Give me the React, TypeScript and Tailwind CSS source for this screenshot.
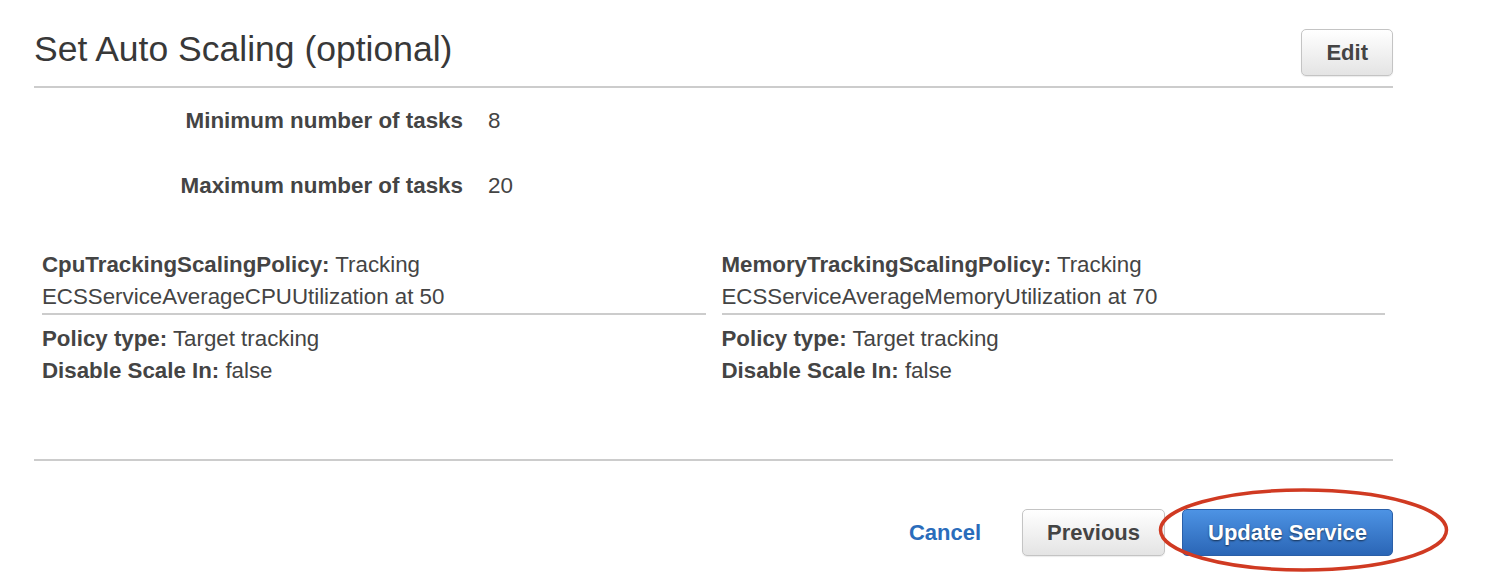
import React from 'react';

const policies = [
  {
    name: 'CpuTrackingScalingPolicy:',
    first: 'Tracking',
    second: 'ECSServiceAverageCPUUtilization at 50',
  },
  {
    name: 'MemoryTrackingScalingPolicy:',
    first: 'Tracking',
    second: 'ECSServiceAverageMemoryUtilization at 70',
  },
];

const greyButton =
  'h-[47px] rounded-[5px] border border-[#c4c4c4] bg-linear-to-b from-[#ffffff] to-[#e4e4e4] px-[24px] text-[22px] font-bold text-[#444] shadow-[0_1px_1px_rgba(0,0,0,0.08)]';

const App: React.FC = () => {
  return (
    <div className="min-h-screen bg-white font-['Liberation_Sans',Arial,sans-serif] text-[#444]">
      <div className="ml-[34px] w-[1359px]">
        {/* Header */}
        <div className="flex h-[88px] items-start justify-between border-b-2 border-[#cccccc]">
          <h2 className="mt-[25px] text-[35.5px] leading-[48px] text-[#383838]">Set Auto Scaling (optional)</h2>
          <button className={`mt-[29px] ${greyButton} h-[46px]`}>Edit</button>
        </div>

        {/* Task counts */}
        <div className="grid grid-cols-[429px_1fr] gap-x-[25px] gap-y-[33px] pt-[17px] text-[22.4px] leading-[32px]">
          <div className="text-right font-bold">Minimum number of tasks</div>
          <div>8</div>
          <div className="text-right font-bold">Maximum number of tasks</div>
          <div>20</div>
        </div>

        {/* Policies */}
        <div className="mt-[47px] grid grid-cols-2 gap-x-[16px] px-[8px] text-[22.3px] leading-[32px]">
          {policies.map((p) => (
            <div key={p.name}>
              <div className="border-b-2 border-[#cccccc]">
                <div>
                  <span className="font-bold">{p.name}</span> {p.first}
                </div>
                <div>{p.second}</div>
              </div>
              <div className="pt-[8px]">
                <div>
                  <span className="font-bold">Policy type:</span> Target tracking
                </div>
                <div>
                  <span className="font-bold">Disable Scale In:</span> false
                </div>
              </div>
            </div>
          ))}
        </div>

        {/* Footer */}
        <div className="mt-[72px] border-t-2 border-[#cccccc]" />
        <div className="mt-[48px] flex items-center justify-end">
          <a href="#" className="mr-[41px] text-[22px] font-bold text-[#2a6cbb]">
            Cancel
          </a>
          <button className={greyButton}>Previous</button>
          <div className="relative ml-[17px]">
            <button className="h-[47px] rounded-[5px] border border-[#2a5fa8] bg-linear-to-b from-[#4d93e4] to-[#2b66b6] px-[25px] text-[22px] font-bold text-white [text-shadow:0_1px_2px_rgba(0,0,0,0.6)]">
              Update Service
            </button>
            <svg
              className="pointer-events-none absolute left-[-24px] top-[-22px]"
              width="292"
              height="86"
              viewBox="0 0 292 86"
            >
              <ellipse cx="145.5" cy="43" rx="143" ry="40" fill="none" stroke="#d03a22" strokeWidth="3.5" />
            </svg>
          </div>
        </div>
      </div>
    </div>
  );
};

export default App;
